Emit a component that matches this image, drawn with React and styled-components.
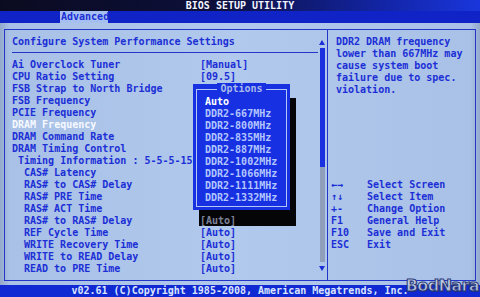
import { Fragment } from "react";
import styled, { createGlobalStyle } from "styled-components";

const GlobalStyle = createGlobalStyle`
  html, body {
    margin: 0;
    padding: 0;
    background: #a9c1e6;
  }
  * {
    box-sizing: border-box;
  }
`;

const MONO = `"DejaVu Sans Mono", "Liberation Mono", monospace`;

const Screen = styled.div`
  position: relative;
  width: 480px;
  height: 297px;
  display: flex;
  flex-direction: column;
  overflow: hidden;
  font-family: ${MONO};
  font-size: 10px;
  font-weight: bold;
  line-height: 12px;
  color: #1c2fd6;
  background: linear-gradient(90deg, #93a9cc 0%, #a9c1e6 2%, #b1c9ec 50%, #a9c1e6 98%, #93a9cc 100%);
`;

const TitleBar = styled.div`
  height: 11px;
  line-height: 11px;
  text-align: center;
  color: #f2f4ff;
  background: linear-gradient(90deg, #0b0b20 0%, #0c0f3a 45%, #1326ac 82%, #1a36dc 100%);
`;

const TabBar = styled.div`
  height: 12px;
  display: flex;
  padding-left: 60px;
  background: #0f23c6;
`;

const Tab = styled.div`
  width: 48px;
  padding-left: 1px;
  background: ${(p) => (p.$active ? "#a4bff0" : "transparent")};
  color: ${(p) => (p.$active ? "#1c2fd6" : "#c8d6ff")};
`;

const Body = styled.div`
  flex: 1;
  padding: 6px 4px 4px 4px;
  display: flex;
`;

const Frame = styled.div`
  flex: 1;
  display: flex;
  border: 1px solid #2436c8;
`;

const LeftPanel = styled.div`
  position: relative;
  width: 323px;
  display: flex;
  border-right: 1px solid #2436c8;
  padding-right: 2px;
`;

const Content = styled.div`
  flex: 1;
  padding: 6px 1px 0 7px;
`;

const Heading = styled.div`
  height: 12px;
  white-space: pre;
`;

const Rule = styled.div`
  height: 1px;
  margin: 4px 0 6px;
  background: #2436c8;
`;

const Row = styled.div`
  display: grid;
  grid-template-columns: 188px 1fr;
  height: 12px;
  white-space: pre;
  color: ${(p) => (p.$selected ? "#f6f9ff" : "#1c2fd6")};
`;

const Label = styled.span`
  padding-left: ${(p) => p.$indent * 6}px;
`;

const Value = styled.span`
  ${(p) =>
    p.$shadowed &&
    `
    position: relative;
    z-index: 3;
    color: #7c8296;
  `}
`;

const ScrollCol = styled.div`
  width: 6px;
  padding-top: 6px;
  display: flex;
  flex-direction: column;
  align-items: center;
`;

const Arrow = styled.div`
  height: 12px;
  display: flex;
  align-items: center;
  justify-content: center;
`;

const Thumb = styled.div`
  width: 5px;
  height: 119px;
  background: #1a30e0;
`;

const Track = styled.div`
  width: 5px;
  height: 95px;
  background: #8e9ebb;
`;

const Popup = styled.div`
  position: absolute;
  z-index: 2;
  left: 188px;
  top: 54px;
  width: 97px;
  height: 126px;
  padding: 5px 3px 3px 3px;
  background: #1630e2;
`;

const PopupShadow = styled.div`
  position: absolute;
  z-index: 1;
  left: 194px;
  top: 68px;
  width: 97px;
  height: 128px;
  background: #050508;
`;

const PopupInner = styled.div`
  position: relative;
  height: 100%;
  border: 1px solid #b4c6f6;
  padding: 6px 0 1px 8px;
`;

const PopupTitle = styled.div`
  position: absolute;
  top: -7px;
  left: 0;
  right: 0;
  display: flex;
  justify-content: center;
`;

const PopupTitleText = styled.span`
  padding: 0 3px;
  background: #1630e2;
  color: #a9b9ea;
`;

const Option = styled.div`
  height: 12px;
  white-space: pre;
  color: ${(p) => (p.$active ? "#ffffff" : "#b3c6ff")};
`;

const RightPanel = styled.div`
  flex: 1;
  padding: 6px 0 0 3px;
  display: flex;
  flex-direction: column;
`;

const HelpText = styled.div`
  padding-left: 5px;
  white-space: pre;
`;

const KeyList = styled.div`
  margin-top: 83px;
  display: grid;
  grid-template-columns: 36px 1fr;
  grid-auto-rows: 12px;
  white-space: pre;
`;

const Footer = styled.div`
  height: 12px;
  line-height: 12px;
  text-align: center;
  background: #1129d2;
  color: #dbe5ff;
`;

const Watermark = styled.div`
  position: absolute;
  right: 1px;
  bottom: 1px;
  font-family: "DejaVu Sans", "Liberation Sans", sans-serif;
  font-size: 16px;
  font-weight: bold;
  line-height: 20px;
  letter-spacing: -0.6px;
  color: rgba(214, 222, 238, 0.85);
  -webkit-text-stroke: 1px #2a3a78;
  text-shadow: 1px 1px 0 rgba(30, 40, 90, 0.6);
`;

const rows = [
  { label: "Ai Overclock Tuner", value: "[Manual]" },
  { label: "CPU Ratio Setting", value: "[09.5]" },
  { label: "FSB Strap to North Bridge" },
  { label: "FSB Frequency" },
  { label: "PCIE Frequency" },
  { label: "DRAM Frequency", selected: true },
  { label: "DRAM Command Rate" },
  { label: "DRAM Timing Control" },
  { label: "Timing Information : 5-5-5-15", indent: 1 },
  { label: "CAS# Latency", indent: 2 },
  { label: "RAS# to CAS# Delay", indent: 2 },
  { label: "RAS# PRE Time", indent: 2 },
  { label: "RAS# ACT Time", indent: 2 },
  { label: "RAS# to RAS# Delay", indent: 2, value: "[Auto]", shadowed: true },
  { label: "REF Cycle Time", indent: 2, value: "[Auto]" },
  { label: "WRITE Recovery Time", indent: 2, value: "[Auto]" },
  { label: "WRITE to READ Delay", indent: 2, value: "[Auto]" },
  { label: "READ to PRE Time", indent: 2, value: "[Auto]" },
];

const options = [
  "Auto",
  "DDR2-667MHz",
  "DDR2-800MHz",
  "DDR2-835MHz",
  "DDR2-887MHz",
  "DDR2-1002MHz",
  "DDR2-1066MHz",
  "DDR2-1111MHz",
  "DDR2-1332MHz",
];

const help = [
  "DDR2 DRAM frequency",
  "lower than 667MHz may",
  "cause system boot",
  "failure due to spec.",
  "violation.",
];

const keys = [
  ["\u2190\u2192", "Select Screen"],
  ["\u2191\u2193", "Select Item"],
  ["+-", "Change Option"],
  ["F1", "General Help"],
  ["F10", "Save and Exit"],
  ["ESC", "Exit"],
];

function Triangle({ down }) {
  return (
    <svg width="6" height="5" viewBox="0 0 6 5">
      <polygon
        points={down ? "0,0 6,0 3,5" : "3,0 6,5 0,5"}
        fill="#1c2fd6"
      />
    </svg>
  );
}

export default function App() {
  return (
    <Screen>
      <GlobalStyle />
      <TitleBar>BIOS SETUP UTILITY</TitleBar>
      <TabBar>
        <Tab $active>Advanced</Tab>
      </TabBar>
      <Body>
        <Frame>
          <LeftPanel>
            <Content>
              <Heading>Configure System Performance Settings</Heading>
              <Rule />
              {rows.map((r) => (
                <Row key={r.label} $selected={r.selected}>
                  <Label $indent={r.indent || 0}>{r.label}</Label>
                  <Value $shadowed={r.shadowed}>{r.value || ""}</Value>
                </Row>
              ))}
            </Content>
            <ScrollCol>
              <Arrow>
                <Triangle />
              </Arrow>
              <Thumb />
              <Track />
              <Arrow>
                <Triangle down />
              </Arrow>
            </ScrollCol>
            <PopupShadow />
            <Popup>
              <PopupInner>
                <PopupTitle>
                  <PopupTitleText>Options</PopupTitleText>
                </PopupTitle>
                {options.map((o, i) => (
                  <Option key={o} $active={i === 0}>
                    {o}
                  </Option>
                ))}
              </PopupInner>
            </Popup>
          </LeftPanel>
          <RightPanel>
            <HelpText>
              {help.map((h) => (
                <div key={h}>{h}</div>
              ))}
            </HelpText>
            <KeyList>
              {keys.map(([k, d]) => (
                <Fragment key={k}>
                  <span>{k}</span>
                  <span>{d}</span>
                </Fragment>
              ))}
            </KeyList>
          </RightPanel>
        </Frame>
      </Body>
      <Footer>v02.61 (C)Copyright 1985-2008, American Megatrends, Inc.</Footer>
      <Watermark>BodNara</Watermark>
    </Screen>
  );
}
